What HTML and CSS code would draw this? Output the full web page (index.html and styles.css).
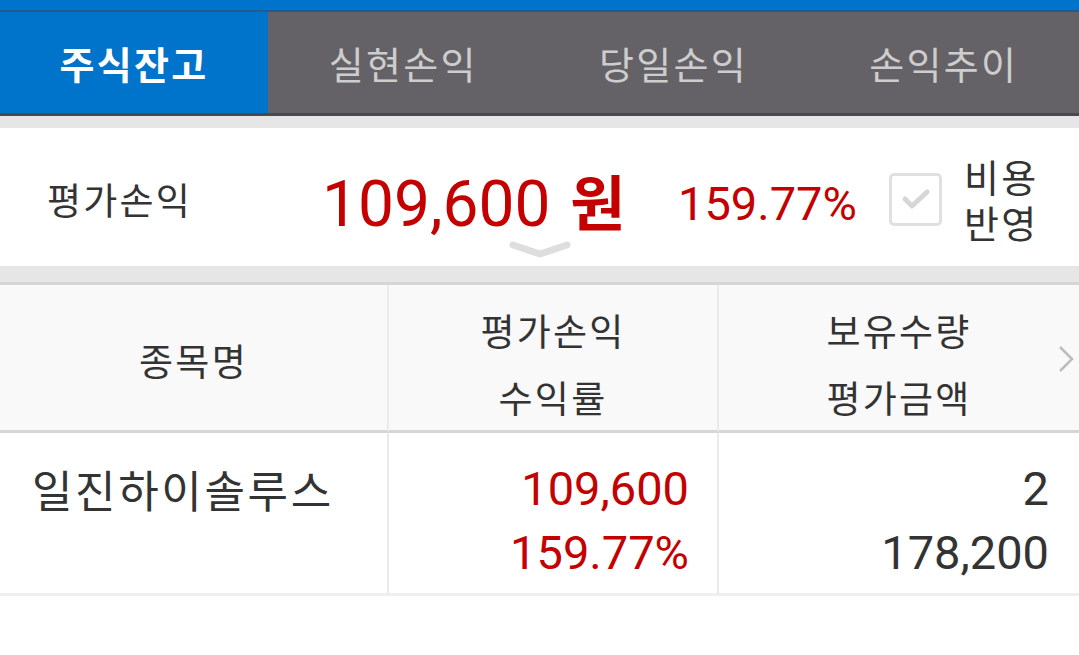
FILE: index.html
```html
<!DOCTYPE html>
<html lang="ko">
<head>
    <meta charset="UTF-8">
    <meta name="viewport" content="width=device-width, initial-scale=1.0">
    <title>주식잔고</title>
    <link rel="stylesheet" href="styles.css">
</head>
<body>
    <div class="status-strip"></div>

    <nav class="tabs">
        <div class="tab active">주식잔고</div>
        <div class="tab">실현손익</div>
        <div class="tab">당일손익</div>
        <div class="tab">손익추이</div>
    </nav>

    <div class="band"></div>

    <section class="summary">
        <div class="summary-label">평가손익</div>
        <div class="summary-amount">109,600 <span class="won">원</span></div>
        <div class="summary-rate">159.77%</div>
        <div class="cost-toggle">
            <span class="checkbox">
                <svg width="30" height="22" viewBox="0 0 30 22">
                    <polyline points="4,11 11,18 26,4" fill="none" stroke="#d6d6d6" stroke-width="5" stroke-linecap="round" stroke-linejoin="round"/>
                </svg>
            </span>
            <span class="cost-label"><span>비용</span><span>반영</span></span>
        </div>
        <svg class="expand" width="62" height="20" viewBox="0 0 62 20">
            <polyline points="4,5 31,14 58,5" fill="none" stroke="#dedede" stroke-width="7" stroke-linecap="round" stroke-linejoin="round"/>
        </svg>
    </section>

    <div class="band band-bottom"></div>

    <div class="grid">
        <div class="cell head name-head">종목명</div>
        <div class="cell head center">평가손익<br>수익률</div>
        <div class="cell head center last">
            보유수량<br>평가금액
            <svg class="more" width="18" height="30" viewBox="0 0 18 30">
                <polyline points="3,3 15,15 3,27" fill="none" stroke="#bdbdbd" stroke-width="2.5"/>
            </svg>
        </div>

        <div class="cell row name">일진하이솔루스</div>
        <div class="cell row num up">109,600<br>159.77%</div>
        <div class="cell row num last">2<br>178,200</div>
    </div>
</body>
</html>
```

FILE: styles.css
```css
:root {
    --blue: #0073ca;
    --tab-gray: #656267;
    --text: #333333;
    --red: #c40000;
    --line: #ebebeb;
    --kr: "Noto Sans CJK KR", sans-serif;
}

* {
    box-sizing: border-box;
    margin: 0;
    padding: 0;
}

body {
    font-family: Roboto, "Noto Sans CJK KR", sans-serif;
    background: #ffffff;
    color: var(--text);
    width: 1079px;
    overflow: hidden;
}

.status-strip {
    height: 12px;
    background: var(--blue);
    border-bottom: 2px solid #1d5d95;
}

.tabs {
    display: flex;
    height: 104px;
    background: var(--tab-gray);
    border-bottom: 3px solid #4b494d;
}

.tab {
    flex: 1;
    display: flex;
    align-items: center;
    justify-content: center;
    font-family: var(--kr);
    font-size: 38px;
    letter-spacing: 0.06em;
    color: #cdcdcd;
}

.tab.active {
    flex: 0 0 268px;
    background: var(--blue);
    color: #ffffff;
    font-weight: bold;
}

.band {
    height: 12px;
    background: #e6e6e6;
}

.band-bottom {
    height: 19px;
    border-bottom: 3px solid #d6d6d6;
}

.summary {
    position: relative;
    display: flex;
    align-items: center;
    height: 138px;
    padding: 4px 0 0 47px;
}

.summary-label {
    font-family: var(--kr);
    font-size: 37px;
    letter-spacing: 0.06em;
    width: 275px;
}

.summary-amount {
    font-size: 64px;
    color: var(--red);
    width: 356px;
    line-height: 1;
    padding-top: 8px;
}

.won {
    font-family: var(--kr);
    font-size: 60px;
    font-weight: bold;
    margin-left: 4px;
}

.summary-rate {
    font-size: 47px;
    color: var(--red);
    width: 211px;
    padding-top: 8px;
}

.cost-toggle {
    display: flex;
    align-items: center;
    gap: 22px;
}

.checkbox {
    width: 53px;
    height: 53px;
    border: 3px solid #e0e0e0;
    border-radius: 5px;
    display: flex;
    align-items: center;
    justify-content: center;
}

.cost-label {
    display: flex;
    flex-direction: column;
    font-family: var(--kr);
    font-size: 38px;
    letter-spacing: 0.06em;
    line-height: 46px;
}

.expand {
    position: absolute;
    left: 509px;
    bottom: 6px;
}

.grid {
    display: grid;
    grid-template-columns: 389px 330px 360px;
}

.cell {
    position: relative;
    border-right: 2px solid var(--line);
}

.cell.last {
    border-right: none;
}

.head {
    height: 148px;
    background: #f9f9f9;
    border-bottom: 3px solid #d6d6d6;
    font-family: var(--kr);
    font-size: 37px;
    letter-spacing: 0.06em;
    line-height: 67px;
    padding-top: 12px;
}

.center {
    text-align: center;
}

.name-head {
    display: flex;
    align-items: center;
    justify-content: center;
    padding-top: 6px;
}

.more {
    position: absolute;
    right: 4px;
    top: 59px;
}

.row {
    height: 163px;
    border-bottom: 3px solid #efefef;
}

.name {
    font-family: var(--kr);
    font-size: 44px;
    letter-spacing: 0.06em;
    padding: 26px 0 0 32px;
    line-height: 60px;
}

.num {
    font-size: 47px;
    text-align: right;
    line-height: 64px;
    padding: 24px 28px 0 0;
}

.num.last {
    padding-right: 30px;
}

.up {
    color: var(--red);
}
```
